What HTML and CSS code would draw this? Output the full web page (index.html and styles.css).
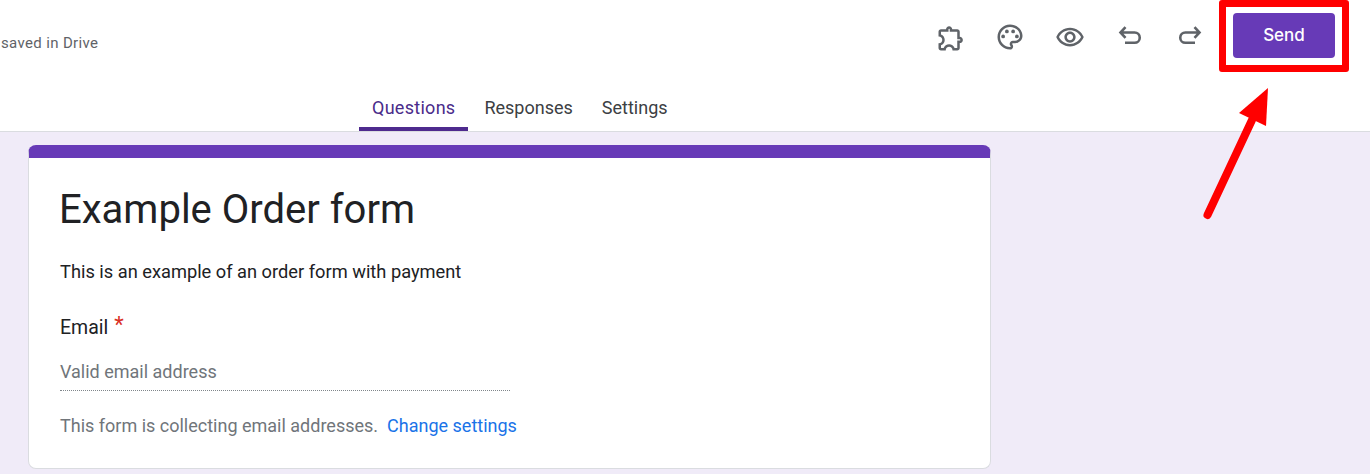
FILE: index.html
```html
<!DOCTYPE html>
<html lang="en">
<head>
<meta charset="utf-8">
<title>Example Order form</title>
<link rel="stylesheet" href="styles.css">
</head>
<body>
<header class="header">
  <div class="toprow">
    <span class="saved">saved in Drive</span>
    <div class="actions">
      <button class="iconbtn" aria-label="Add-ons"><svg viewBox="0 0 24 24" class="icon puzzle"><path d="M10.5 4.5c.28 0 .5.22.5.5v2h6v6h2c.28 0 .5.22.5.5s-.22.5-.5.5h-2v6h-2.12c-.68-1.75-2.39-3-4.38-3s-3.7 1.25-4.38 3H4v-2.12c1.75-.68 3-2.39 3-4.38 0-1.99-1.24-3.7-2.99-4.38L4 7h6V5c0-.28.22-.5.5-.5m0-2C9.12 2.5 8 3.62 8 5H4c-1.1 0-1.99.9-1.99 2v3.8h.29c1.49 0 2.7 1.21 2.7 2.7s-1.21 2.7-2.7 2.7H2V20c0 1.1.9 2 2 2h3.8v-.3c0-1.49 1.21-2.7 2.7-2.7s2.7 1.21 2.7 2.7v.3H17c1.1 0 2-.9 2-2v-4c1.38 0 2.5-1.12 2.5-2.5S20.38 11 19 11V7c0-1.1-.9-2-2-2h-4c0-1.38-1.12-2.5-2.5-2.5z"/></svg></button>
      <button class="iconbtn" aria-label="Theme"><svg viewBox="0 0 24 24" class="icon"><path d="M12 22C6.49 22 2 17.51 2 12S6.49 2 12 2s10 4.04 10 9c0 3.31-2.69 6-6 6h-1.77c-.28 0-.5.22-.5.5 0 .12.05.23.13.33.41.47.64 1.06.64 1.67 0 1.38-1.12 2.5-2.5 2.5zm0-18c-4.41 0-8 3.59-8 8s3.59 8 8 8c.28 0 .5-.22.5-.5 0-.16-.08-.28-.14-.35-.41-.46-.63-1.05-.63-1.65 0-1.38 1.12-2.5 2.5-2.5H16c2.21 0 4-1.79 4-4 0-3.86-3.59-7-8-7z"/><circle cx="6.5" cy="11.5" r="1.5"/><circle cx="9.5" cy="7.5" r="1.5"/><circle cx="14.5" cy="7.5" r="1.5"/><circle cx="17.5" cy="11.5" r="1.5"/></svg></button>
      <button class="iconbtn" aria-label="Preview"><svg viewBox="0 0 24 24" class="icon"><path d="M12 6.5c3.79 0 7.17 2.13 8.82 5.5-1.65 3.37-5.02 5.5-8.82 5.5S4.83 15.37 3.18 12C4.83 8.63 8.21 6.5 12 6.5m0-2C7 4.5 2.73 7.61 1 12c1.73 4.39 6 7.5 11 7.5s9.27-3.11 11-7.5c-1.73-4.39-6-7.5-11-7.5zm0 5c1.38 0 2.5 1.12 2.5 2.5s-1.12 2.5-2.5 2.5-2.5-1.12-2.5-2.5 1.12-2.5 2.5-2.5m0-2c-2.48 0-4.5 2.02-4.5 4.5s2.02 4.5 4.5 4.5 4.5-2.02 4.5-4.5-2.02-4.5-4.5-4.5z"/></svg></button>
      <button class="iconbtn" aria-label="Undo"><svg viewBox="0 0 30 30" class="icon stroke"><path d="M10.500 5.200 5.500 10.500l5 5.300M5.500 10.500H19.600a5.150 5.150 0 0 1 0 10.300H10"/></svg></button>
      <button class="iconbtn" aria-label="Redo"><svg viewBox="0 0 30 30" class="icon stroke"><path d="M19.500 5.200l5 5.300-5 5.300M24.500 10.500H10.400a5.150 5.150 0 0 0 0 10.300H20"/></svg></button>
      <button class="send">Send</button>
    </div>
  </div>
  <nav class="tabs">
    <a class="tab active">Questions</a>
    <a class="tab">Responses</a>
    <a class="tab">Settings</a>
  </nav>
</header>
<main class="main">
  <section class="card">
    <h1 class="title">Example Order form</h1>
    <p class="desc">This is an example of an order form with payment</p>
    <div class="label">Email <span class="req">*</span></div>
    <div class="field">Valid email address</div>
    <p class="note">This form is collecting email addresses.<a class="link">Change settings</a></p>
  </section>
</main>
<div class="callout"></div>
<svg class="arrow" viewBox="0 0 1370 474" width="1370" height="474" aria-hidden="true">
  <path d="M1207.500 215 1252 120" class="arrow-line"/>
  <path d="M1268 88 1239 113 1266 126z" class="arrow-head"/>
</svg>
</body>
</html>
```
FILE: styles.css
```css
* { box-sizing: border-box; }
html, body { margin: 0; padding: 0; height: 474px; overflow: hidden; }
body { position: relative; background: #fff; font-family: Roboto, "Liberation Sans", sans-serif; color: #202124; }
.header { background: #fff; height: 132px; border-bottom: 1px solid #dadce0; display: flex; flex-direction: column; }
.toprow { height: 87px; display: flex; justify-content: space-between; align-items: flex-start; padding-right: 35px; }
.saved { margin-top: 34px; padding-left: 1px; font-size: 15px; line-height: 18px; color: #5f6368; letter-spacing: .35px; }
.actions { display: flex; align-items: flex-start; padding-top: 13px; }
.iconbtn { width: 60px; height: 48px; padding: 0; border: 0; background: none; display: flex; align-items: center; justify-content: center; }
.icon { width: 30px; height: 30px; fill: #5f6368; }
.icon.puzzle { margin-left: 2px; margin-top: 1px; }
.icon.stroke { fill: none; stroke: #5f6368; stroke-width: 2.600; }
.send { width: 102px; height: 45px; margin-left: 13px; padding: 0 0 2px; border: 0; border-radius: 4px; background: #673ab7; color: #fff; font-family: Inter, Roboto, sans-serif; font-size: 17px; font-weight: 500; }
.tabs { height: 44px; display: flex; gap: 3px; padding-left: 359px; }
.tab { height: 44px; padding: 10px 13px 0; display: flex; align-items: flex-start; font-size: 18px; line-height: 22px; color: #3c4043; }
.tab.active { color: #4a2c8a; letter-spacing: .28px; border-bottom: 4px solid #4e2a8e; }
.main { height: 342px; background: #f0ebf8; padding: 13px 0 0 28px; }
.card { width: 963px; height: 324px; background: #fff; border: 1px solid #dadce0; border-top: 13px solid #673ab7; border-radius: 8px; padding: 0 31px; }
.title { margin: 27px 0 0 -1px; font-size: 40px; font-weight: 400; line-height: 50px; color: #202124; }
.desc { margin: 25px 0 0; font-size: 18.250px; line-height: 24px; color: #202124; }
.label { margin-top: 31px; font-size: 19.500px; line-height: 26px; color: #202124; }
.req { color: #d93025; font-size: 22px; line-height: 0; vertical-align: 2px; margin-left: 1px; }
.field { width: 450px; height: 35px; margin-top: 15px; font-size: 18px; line-height: 24px; color: #70757a; border-bottom: 1px dotted #80868b; padding-top: 4px; }
.note { margin: 23px 0 0; width: 480px; font-size: 18px; line-height: 24px; color: #70757a; white-space: nowrap; }
.link { color: #1a73e8; margin-left: 9px; }
.callout { position: absolute; left: 1219px; top: 0; width: 130px; height: 72px; border: 7px solid #f00; border-radius: 3px; }
.arrow { position: absolute; left: 0; top: 0; pointer-events: none; }
.arrow-line { stroke: #f00; stroke-width: 8px; stroke-linecap: round; fill: none; }
.arrow-head { fill: #f00; }
```
